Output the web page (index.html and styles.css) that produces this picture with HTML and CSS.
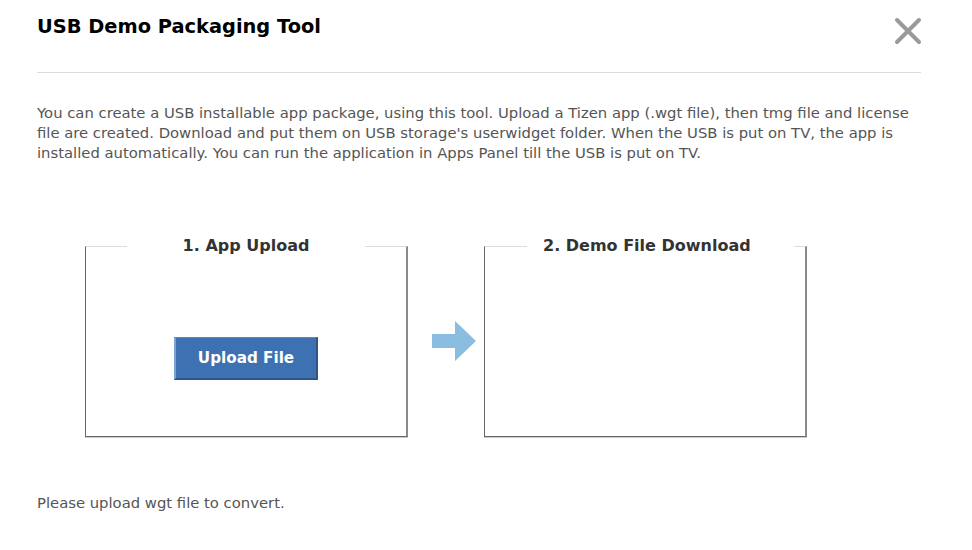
FILE: index.html
```html
<!DOCTYPE html>
<html>
<head>
<meta charset="utf-8">
<link rel="stylesheet" href="styles.css">
</head>
<body>
<div class="dialog">
  <header class="head">
    <h1 class="title">USB Demo Packaging Tool</h1>
    <button class="close" aria-label="Close">
      <svg width="28" height="28" viewBox="0 0 28 28"><path d="M3 3 L25 25 M25 3 L3 25" stroke="#9a9a9a" stroke-width="4" stroke-linecap="round"/></svg>
    </button>
  </header>
  <p class="desc">You can create a USB installable app package, using this tool. Upload a Tizen app (.wgt file), then tmg file and license file are created. Download and put them on USB storage's userwidget folder. When the USB is put on TV, the app is installed automatically. You can run the application in Apps Panel till the USB is put on TV.</p>
  <div class="steps">
    <fieldset class="step">
      <legend class="legend l1">1. App Upload</legend>
      <div class="step-body"><button class="upload">Upload File</button></div>
    </fieldset>
    <div class="arrow">
      <svg width="44" height="40" viewBox="0 0 44 40"><path d="M0 13 H23 V0 L44 20 L23 40 V27 H0 Z" fill="#8bbde0"/></svg>
    </div>
    <fieldset class="step">
      <legend class="legend l2">2. Demo File Download</legend>
      <div class="step-body"></div>
    </fieldset>
  </div>
  <p class="status">Please upload wgt file to convert.</p>
</div>
</body>
</html>
```
FILE: styles.css
```css
html, body { margin: 0; padding: 0; background: #fff; }
body { font-family: "DejaVu Sans", Verdana, sans-serif; }
.dialog { padding: 0 51px 0 37px; }
.head { display: flex; justify-content: space-between; align-items: flex-start; border-bottom: 1px solid #dcdcdc; height: 72px; }
.title { margin: 15px 0 0; font-size: 19.4px; font-weight: bold; color: #000; line-height: 24px; }
.close { margin: 17px -1px 0 0; padding: 0; border: 0; background: none; width: 28px; height: 28px; }
.desc { margin: 30px 0 0; font-size: 14.8px; line-height: 20px; color: #555; }
.steps { display: flex; align-items: center; margin: 73px 0 0 48px; }
.step { width: 320px; height: 199px; margin: 0; padding: 0; border: 1px solid #666; border-top-color: #dcdcdc; border-right: 2px solid #8a8a8a; box-shadow: 0 1px 0 #ccc; box-sizing: content-box; }
.legend { font-size: 16px; font-weight: bold; color: #333; line-height: 20px; }
.l1 { margin: 0 auto; padding: 0 56px; }
.l2 { margin: 0 0 0 42px; padding: 0 43px 0 16px; }
.step-body { display: flex; justify-content: center; align-items: center; height: 190px; }
.upload { width: 144px; height: 43px; margin-top: 14px; background: #3e71b2; color: #fff; font-family: inherit; font-weight: bold; font-size: 15.2px; border: 0; border-left: 2px solid #7aa3d6; border-top: 1px solid #5a88c4; border-bottom: 2px solid #2f5686; border-right: 2px solid #2f5686; }
.arrow { width: 76px; display: flex; justify-content: flex-start; padding-left: 24px; box-sizing: border-box; }
.arrow svg { margin-top: 8px; }
.status { margin: 56px 0 0; font-size: 14.8px; color: #555; line-height: 20px; }
```
